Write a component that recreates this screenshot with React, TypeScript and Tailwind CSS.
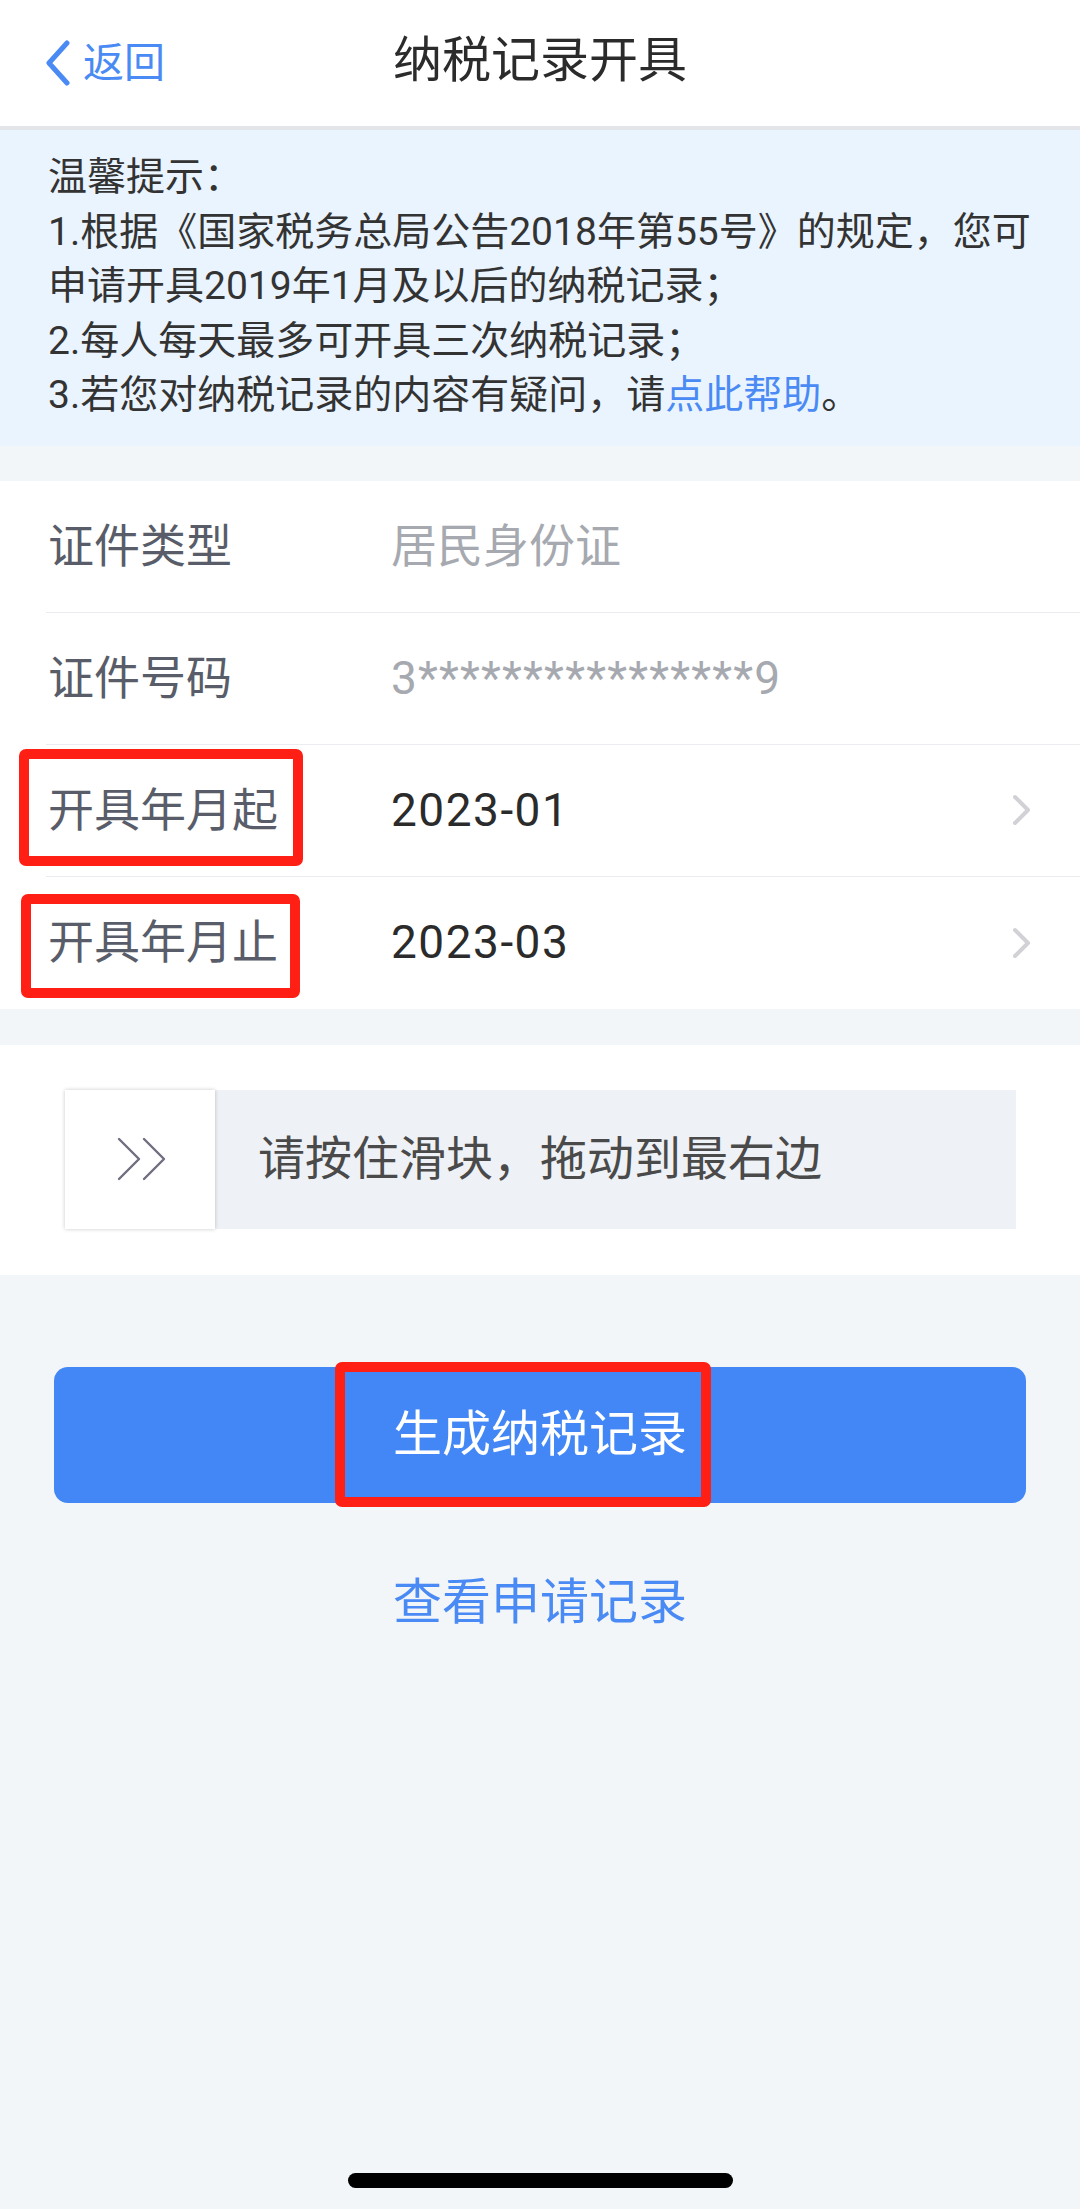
import React from "react";

const font = "font-['Roboto','Noto_Sans_CJK_SC',sans-serif]";

function ChevronRight() {
  return (
    <svg width="22" height="32" viewBox="0 0 22 32" className="shrink-0">
      <path d="M4 3 L17 16 L4 29" fill="none" stroke="#d1d1d6" strokeWidth="4" strokeLinecap="round" strokeLinejoin="round" />
    </svg>
  );
}

function Row({
  label,
  value,
  valueClass,
  arrow,
  last,
  box,
}: {
  label: string;
  value: string;
  valueClass: string;
  arrow?: boolean;
  last?: boolean;
  box?: string;
}) {
  return (
    <div className={`relative h-[132px] flex items-center pr-[47px] ${last ? "" : "border-b border-[#ebecef]"}`}>
      <span className="w-[345px] pl-[2px] text-[46px] text-[#585d69]">{label}</span>
      <span className={`flex-1 text-[46px] ${valueClass}`}>{value}</span>
      {arrow && <ChevronRight />}
      {box && <div className={`absolute border-[10px] border-[#ff1f14] rounded-[7px] ${box}`} />}
    </div>
  );
}

export default function App() {
  return (
    <div className={`relative h-[2209px] bg-[#f3f6f9] ${font}`}>
      {/* header */}
      <div className="relative h-[130px] bg-white border-b-4 border-[#e4e5e9] flex items-center justify-center">
        <div className="absolute left-[45px] top-[40px] flex items-center gap-[12px]">
          <svg width="26" height="46" viewBox="0 0 26 46">
            <path d="M22 3 L4 23 L22 43" fill="none" stroke="#4a8af4" strokeWidth="5" strokeLinecap="round" strokeLinejoin="round" />
          </svg>
          <span className="text-[41px] leading-[46px] text-[#4a8af4]">返回</span>
        </div>
        <h1 className="text-[49px] text-[#2b2b2b] -mt-[4px]">纳税记录开具</h1>
      </div>

      {/* tips */}
      <div className="bg-[#eaf4fe] pl-[48px] pt-[20px] pb-[23px] text-[39px] leading-[54.5px] text-[#333333] whitespace-nowrap">
        <div>温馨提示：</div>
        <div>1.根据《国家税务总局公告2018年第55号》的规定，您可</div>
        <div>申请开具2019年1月及以后的纳税记录；</div>
        <div>2.每人每天最多可开具三次纳税记录；</div>
        <div>
          3.若您对纳税记录的内容有疑问，请<span className="text-[#4a8af4]">点此帮助</span>。
        </div>
      </div>

      {/* form */}
      <div className="mt-[35px] bg-white pl-[46px]">
        <Row label="证件类型" value="居民身份证" valueClass="text-[#a6a9af]" />
        <Row label="证件号码" value="3****************9" valueClass="text-[#a6a9af] tracking-[1.2px]" />
        <Row
          label="开具年月起"
          value="2023-01"
          valueClass="text-[#2b2b2b] tracking-[1.5px]"
          arrow
          box="left-[-27px] top-[4px] w-[284px] h-[117px]"
        />
        <Row
          label="开具年月止"
          value="2023-03"
          valueClass="text-[#2b2b2b] tracking-[1.5px]"
          arrow
          last
          box="left-[-25px] top-[17px] w-[279px] h-[104px]"
        />
      </div>

      {/* slider */}
      <div className="mt-[36px] bg-white pt-[45px] pb-[46px] pl-[65px] pr-[64px]">
        <div className="h-[139px] bg-[#eef1f5] flex items-center">
          <div className="w-[150px] h-full bg-white shadow-[0_0_4px_rgba(0,0,0,0.22)] flex items-center justify-center pl-[2px]">
            <svg width="50" height="44" viewBox="0 0 50 44">
              <path d="M3 2 L23 22 L3 42 M28 2 L48 22 L28 42" fill="none" stroke="#6e6e80" strokeWidth="2.4" strokeLinecap="round" strokeLinejoin="round" />
            </svg>
          </div>
          <span className="ml-[43px] text-[47px] text-[#4a4a4a]">请按住滑块，拖动到最右边</span>
        </div>
      </div>

      {/* button */}
      <div className="mt-[92px] px-[54px]">
        <div className="relative h-[136px] rounded-[14px] bg-[#4287f5] flex items-center justify-center">
          <span className="text-[49px] text-white">生成纳税记录</span>
          <div className="absolute left-[281px] top-[-5px] w-[376px] h-[145px] border-[10px] border-[#ff1f14] rounded-[7px]" />
        </div>
      </div>

      <div className="mt-[70px] text-center text-[49px] leading-[60px] text-[#4a8af4]">查看申请记录</div>

      {/* home indicator */}
      <div className="absolute left-[348px] bottom-[21px] w-[385px] h-[15px] rounded-full bg-black" />
    </div>
  );
}
